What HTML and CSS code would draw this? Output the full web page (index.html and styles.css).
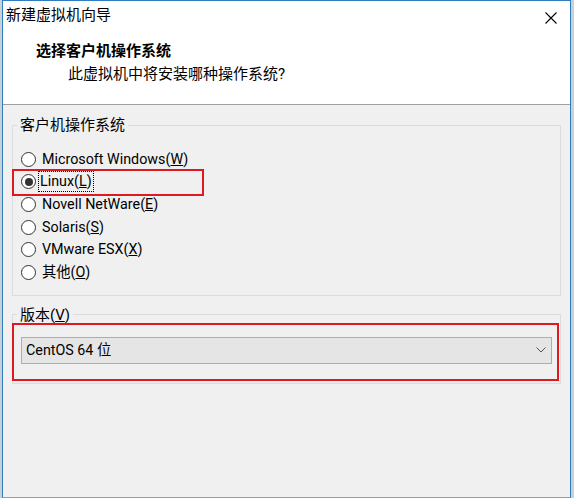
FILE: index.html
```html
<!DOCTYPE html>
<html lang="zh-CN">
<head>
<meta charset="utf-8">
<title>新建虚拟机向导</title>
<link rel="stylesheet" href="styles.css">
</head>
<body>
<div class="window">
  <div class="header">
    <div class="titlebar">
      <span class="title">新建虚拟机向导</span>
      <svg class="close" width="12" height="12" viewBox="0 0 12 12"><path d="M0.5 0.5L11.5 11.5M11.5 0.5L0.5 11.5" stroke="#000" stroke-width="1.1" fill="none"/></svg>
    </div>
    <div class="heading">选择客户机操作系统</div>
    <div class="sub">此虚拟机中将安装哪种操作系统?</div>
  </div>
  <div class="content">
    <fieldset class="group os-group">
      <legend>客户机操作系统</legend>
      <div class="radio-row"><span class="radio"></span><span class="label">Microsoft Windows(<u>W</u>)</span></div>
      <div class="radio-row highlight"><span class="radio checked"></span><span class="label focus">Linux(<u>L</u>)</span></div>
      <div class="radio-row"><span class="radio"></span><span class="label">Novell NetWare(<u>E</u>)</span></div>
      <div class="radio-row"><span class="radio"></span><span class="label">Solaris(<u>S</u>)</span></div>
      <div class="radio-row"><span class="radio"></span><span class="label">VMware ESX(<u>X</u>)</span></div>
      <div class="radio-row"><span class="radio"></span><span class="label">其他(<u>O</u>)</span></div>
    </fieldset>
    <fieldset class="group version-group">
      <legend>版本(<u>V</u>)</legend>
      <div class="select">
        <span class="select-text">CentOS 64 位</span>
        <svg class="chevron" width="10" height="6" viewBox="0 0 10 6"><path d="M0.5 0.5L5 5L9.5 0.5" stroke="#555" stroke-width="1" fill="none"/></svg>
      </div>
    </fieldset>
  </div>
</div>
</body>
</html>
```
FILE: styles.css
```css
html, body {
  margin: 0;
  padding: 0;
}
body {
  background: #c9d0d6;
  padding-left: 2px;
  font-family: Roboto, "Noto Sans CJK SC", sans-serif;
  font-size: 15px;
  color: #000;
}
.window {
  width: 567px;
  height: 496px;
  border: 1px solid #2f7dbf;
  border-bottom-color: #9a9a9a;
  background: #f0f0f0;
  display: flex;
  flex-direction: column;
}
.header {
  height: 103px;
  background: #fff;
  border-bottom: 1px solid #a0a0a0;
  display: flex;
  flex-direction: column;
}
.titlebar {
  display: flex;
  justify-content: space-between;
  align-items: center;
  padding: 4px 13px 0 3px;
  height: 20px;
  line-height: 20px;
}
.title {
  font-size: 15px;
}
.close {
  margin-top: 6px;
}
.heading {
  margin-top: 16px;
  padding-left: 33px;
  font-weight: bold;
  line-height: 20px;
}
.sub {
  margin-top: 3px;
  padding-left: 65px;
  line-height: 20px;
}
.content {
  padding: 10px 9px 0 9px;
  display: flex;
  flex-direction: column;
}
.group {
  margin: 0;
  border: 1px solid #dcdcdc;
  min-width: 0;
}
.group legend {
  margin-left: -4px;
  padding: 0 3px;
  line-height: 20px;
  height: 20px;
}
.os-group {
  padding: 13px 0 11px 8px;
}
.radio-row {
  display: flex;
  align-items: center;
  height: 22.6px;
  position: relative;
}
.radio {
  width: 13px;
  height: 13px;
  border: 1px solid #333;
  border-radius: 50%;
  background: #fff;
  flex: none;
  display: flex;
  align-items: center;
  justify-content: center;
}
.radio.checked::after {
  content: "";
  width: 8px;
  height: 8px;
  border-radius: 50%;
  background: #333;
}
.label {
  margin-left: 4px;
  line-height: 19px;
  padding: 0 1px;
  border: 1px solid transparent;
  font-size: 14.3px;
}
.label.focus {
  border: 1px dotted #000;
  margin-left: 2px;
}
.highlight::before {
  content: "";
  position: absolute;
  left: -9px;
  top: -2px;
  width: 188px;
  height: 23px;
  border: 2px solid #dc1a20;
}
.version-group {
  margin-top: 9px;
  padding: 12px 8px 19px 8px;
  position: relative;
}
.version-group::before {
  content: "";
  position: absolute;
  left: -1px;
  top: -2px;
  width: 543px;
  height: 54px;
  border: 2px solid #dc1a20;
}
.select {
  height: 25px;
  border: 1px solid #adadad;
  background: #e5e5e5;
  display: flex;
  align-items: center;
  justify-content: space-between;
  padding: 0 5px 0 4px;
}
.select-text {
  line-height: 20px;
  font-size: 14.3px;
}
.chevron {
  display: block;
}
```
